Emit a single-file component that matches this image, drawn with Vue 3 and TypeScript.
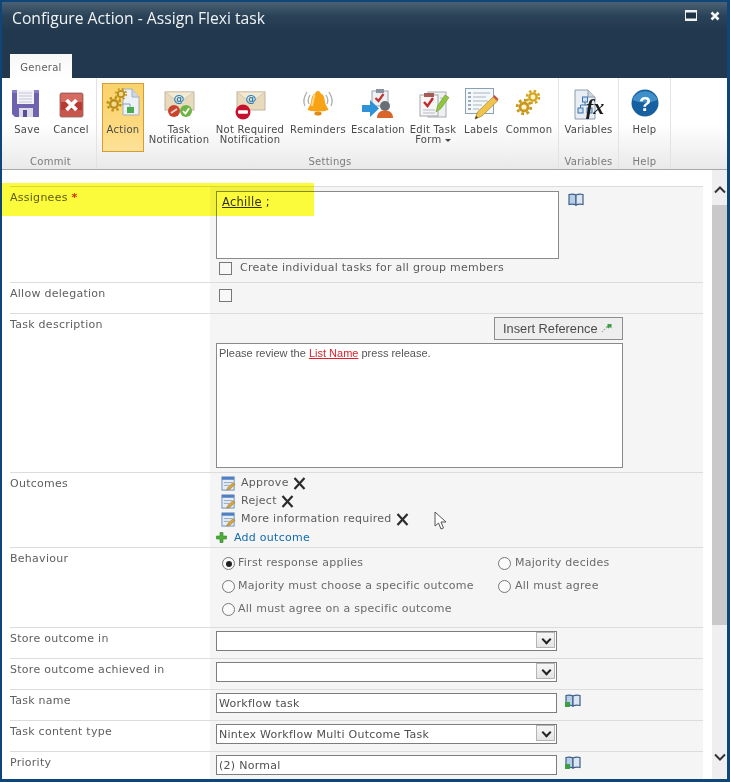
<script setup lang="ts">
const outcomes = ['Approve', 'Reject', 'More information required']
const leftOptions = [
  { label: 'First response applies', checked: true },
  { label: 'Majority must choose a specific outcome', checked: false },
  { label: 'All must agree on a specific outcome', checked: false },
]
const rightOptions = ['Majority decides', 'All must agree']
</script>

<template>
  <div class="dialog">
    <header class="titlebar">
      <div class="title-row">
        <h1>Configure Action - Assign Flexi task</h1>
        <div class="window-controls">
          <svg width="12" height="11" viewBox="0 0 12 11">
            <rect x="0.5" y="0.5" width="11" height="10" fill="#1f3347" stroke="#f2f2f2" />
            <rect x="0" y="0" width="12" height="2.5" fill="#f2f2f2" />
            <rect x="1" y="8.5" width="10" height="2" fill="#f2f2f2" />
          </svg>
          <svg width="10" height="10" viewBox="0 0 10 10">
            <path d="M1.5 1.5l7 7M8.5 1.5l-7 7" stroke="#f4f4f4" stroke-width="2.6" />
          </svg>
        </div>
      </div>
      <div class="tab">General</div>
    </header>

    <nav class="ribbon">
      <section class="group commit">
        <div class="buttons">
          <div class="rb w44">
            <svg class="ico" viewBox="0 0 36 36">
              <path d="M3 5h27v27H6l-3-3z" fill="#6f62ae" />
              <path d="M3 5h27v3H3z" fill="#8a7ec6" />
              <rect x="8" y="5" width="17" height="14" fill="#f3f3f8" />
              <path d="M10 8h13M10 11h13M10 14h13M10 17h13" stroke="#c5c5d4" />
              <rect x="10" y="23" width="14" height="9" fill="#dcdce8" />
              <rect x="14" y="25" width="4" height="7" fill="#5b4f98" />
            </svg>
            <span>Save</span>
          </div>
          <div class="rb w44">
            <svg class="ico" viewBox="0 0 36 36">
              <rect x="7" y="8" width="23" height="24" rx="1.5" fill="#b93a30" stroke="#a4827c" />
              <rect x="8" y="9" width="21" height="8" fill="#d66a60" />
              <rect x="8" y="25" width="21" height="6" fill="#c9564c" />
              <path d="M13.500 15l10 10M23.500 15l-10 10" stroke="#fff" stroke-width="3.800" />
            </svg>
            <span>Cancel</span>
          </div>
        </div>
        <footer>Commit</footer>
      </section>

      <section class="group settings">
        <div class="buttons">
          <div class="rb w42 active">
            <svg class="ico" viewBox="0 0 36 36">
              <path d="M18 4h9l7 8v18H18z" fill="#eef2f7" stroke="#9fb0c2" />
              <path d="M27 4v8h7" fill="#cfd8e2" stroke="#9fb0c2" />
              <path d="M17 19h8v4" stroke="#7fa0b8" fill="none" />
              <rect x="22" y="22" width="7" height="6" fill="#4cab50" />
              <circle cx="16" cy="9" r="3.200" fill="#f3dc8c" stroke="#b98d1c" stroke-width="1.800" />
              <circle cx="16" cy="9" r="5.200" fill="none" stroke="#c99a1f" stroke-width="1.800" stroke-dasharray="2 2.100" />
              <circle cx="9" cy="19" r="3.800" fill="#f3dc8c" stroke="#b98d1c" stroke-width="2.400" />
              <circle cx="9" cy="19" r="6.400" fill="none" stroke="#bd8f1a" stroke-width="2.400" stroke-dasharray="2.400 2.600" />
            </svg>
            <span>Action</span>
          </div>
          <div class="rb w70">
            <svg class="ico" viewBox="0 0 36 36">
              <rect x="4" y="7" width="29" height="18" fill="#e8dbbd" stroke="#c0b59c" />
              <path d="M4 7l14.500 11L33 7z" fill="#f3ead4" stroke="#d3c8ae" />
              <text x="18" y="17" class="at">@</text>
              <circle cx="13" cy="26" r="6" fill="#c9442e" />
              <path d="M10 28l6-4" stroke="#f3d6cf" stroke-width="1.800" />
              <circle cx="25" cy="26" r="6" fill="#6fb544" />
              <path d="M22 26l2.400 2.600 3.800-5.400" fill="none" stroke="#fff" stroke-width="1.800" />
            </svg>
            <span>Task<br />Notification</span>
          </div>
          <div class="rb w72">
            <svg class="ico" viewBox="0 0 36 36">
              <rect x="5" y="7" width="28" height="18" fill="#e8dbbd" stroke="#c0b59c" />
              <path d="M5 7l14 11L33 7z" fill="#f3ead4" stroke="#d3c8ae" />
              <text x="19" y="17" class="at">@</text>
              <circle cx="11" cy="27" r="7.500" fill="#c8102e" />
              <rect x="6" y="25.200" width="10" height="3.600" rx="1" fill="#fff" />
            </svg>
            <span>Not Required<br />Notification</span>
          </div>
          <div class="rb w64">
            <svg class="ico" viewBox="0 0 36 36">
              <path d="M7 7q-5 8-2 14M10 10q-3 5-1 9M29 7q5 8 2 14M26 10q3 5 1 9" fill="none" stroke="#adadad" stroke-width="1.300" />
              <path d="M18 6c1.600 0 2.600 1 2.600 2.400 3.400 1.300 4 4.600 4.400 8.600.3 3 2.400 5 3.500 7.500 0 1-5 2-10.500 2S7.500 25.500 7.500 24.500c1.100-2.500 3.200-4.500 3.500-7.500.4-4 1-7.300 4.400-8.600C15.400 7 16.400 6 18 6z" fill="#f8a216" />
              <path d="M15 10c-2 2-2 7-3 11" stroke="#fcd98a" stroke-width="2" fill="none" />
              <ellipse cx="18" cy="28.500" rx="3.600" ry="2" fill="#e08a12" />
            </svg>
            <span>Reminders</span>
          </div>
          <div class="rb w56">
            <svg class="ico" viewBox="0 0 36 36">
              <rect x="12" y="6" width="16" height="15" fill="#eef0f3" stroke="#9aa2ac" />
              <rect x="16" y="4" width="8" height="4" fill="#8a929c" />
              <path d="M15.500 13l3 3 5-7" fill="none" stroke="#c0322e" stroke-width="2.200" />
              <circle cx="25" cy="21" r="5" fill="#6a6f75" />
              <path d="M17 33c0-5 3-7.500 8-7.500s8 2.500 8 7.500z" fill="#d9652b" />
              <path d="M2 20h8v-5l9 8.500-9 8.500v-5H2z" fill="#2d93d6" />
            </svg>
            <span>Escalation</span>
          </div>
          <div class="rb w54">
            <svg class="ico" viewBox="0 0 36 36">
              <rect x="13" y="7" width="18" height="25" fill="#eef0f2" stroke="#a5adb5" />
              <path d="M25 13h3M25 17h3M25 21h3" stroke="#b5bcc4" />
              <rect x="5" y="10" width="18" height="21" fill="#f6f6f6" stroke="#a5a5a5" />
              <rect x="9" y="8" width="10" height="4" fill="#a85a57" />
              <path d="M9 17l3.500 4 5.500-8" fill="none" stroke="#c6282c" stroke-width="2.400" />
              <path d="M8 25h12M8 28h12" stroke="#b5bcc4" />
              <path d="M21 27l1.500-6L30 10l4 2.500-8 11z" fill="#8fc53f" stroke="#6b9a2c" stroke-width=".6" />
            </svg>
            <span>Edit Task<br />Form <i class="caret"></i></span>
          </div>
          <div class="rb w42">
            <svg class="ico" viewBox="0 0 36 36">
              <rect x="2.500" y="3.500" width="28" height="25" fill="#f5f8fb" stroke="#8aa0b5" />
              <path d="M5 8h3M5 12h3M5 16h3M5 20h3M5 24h3" stroke="#4a5f74" />
              <path d="M10 8h17M10 12h13M10 16h15M10 20h9M10 24h6" stroke="#aab6c2" />
              <path d="M12 34l2.500-7L30 12l4.500 4L19 31z" fill="#f0c34a" stroke="#a5822c" stroke-width=".7" />
              <path d="M30 12l4.500 4 1-2-4-4z" fill="#c9554c" />
              <path d="M12 34l1-3 2 1.500z" fill="#333" />
            </svg>
            <span>Labels</span>
          </div>
          <div class="rb w54">
            <svg class="ico" viewBox="0 0 36 36">
              <circle cx="22" cy="12" r="3.600" fill="#fbf3cf" stroke="#d5a51e" stroke-width="2.400" />
              <circle cx="22" cy="12" r="6" fill="none" stroke="#d5a51e" stroke-width="2.600" stroke-dasharray="2.500 2.200" />
              <circle cx="13" cy="22" r="4" fill="#fbf3cf" stroke="#c9971a" stroke-width="2.800" />
              <circle cx="13" cy="22" r="6.800" fill="none" stroke="#c9971a" stroke-width="2.800" stroke-dasharray="2.800 2.500" />
            </svg>
            <span>Common</span>
          </div>
        </div>
        <footer>Settings</footer>
      </section>

      <section class="group variables">
        <div class="buttons">
          <div class="rb w60">
            <svg class="ico" viewBox="0 0 36 36">
              <path d="M4 5h13l7 7v22H4z" fill="#e9eef4" stroke="#8c9cb0" />
              <path d="M17 5v7h7" fill="#ccd6e2" stroke="#8c9cb0" />
              <rect x="11.500" y="12" width="5" height="5" fill="#cfe1f3" stroke="#3d74ab" />
              <rect x="7" y="23" width="5" height="5" fill="#cfe1f3" stroke="#3d74ab" />
              <rect x="16" y="23" width="5" height="5" fill="#cfe1f3" stroke="#3d74ab" />
              <path d="M14 17v3M9.500 23v-3h9v3" fill="none" stroke="#3d74ab" />
              <text x="15" y="29" class="fx">fx</text>
            </svg>
            <span>Variables</span>
          </div>
        </div>
        <footer>Variables</footer>
      </section>

      <section class="group help">
        <div class="buttons">
          <div class="rb w52">
            <svg class="ico" viewBox="0 0 36 36">
              <circle cx="18" cy="18" r="13.500" fill="#17609f" />
              <path d="M5.500 15a13 12 0 0 1 25 0q-12.500 5-25 0z" fill="#3f8fcb" />
              <text x="18" y="25.500" class="q">?</text>
            </svg>
            <span>Help</span>
          </div>
        </div>
        <footer>Help</footer>
      </section>
    </nav>

    <main class="content">
      <div class="form">
        <div class="row assignees">
          <label>Assignees <b>*</b></label>
          <div class="field">
            <div class="with-icon">
              <div class="people-box"><u>Achille</u> ;</div>
              <svg class="book" viewBox="0 0 16 13">
                <path d="M1 1.500q4-1 7 .5v10q-3-1.500-7-.5z" fill="#b8cde6" stroke="#3f5f88" stroke-width="1.200" />
                <path d="M15 1.500q-4-1-7 .5v10q3-1.500 7-.5z" fill="#dbe6f2" stroke="#3f5f88" stroke-width="1.200" />
              </svg>
            </div>
            <div class="check-line">
              <span class="checkbox"></span>
              <span>Create individual tasks for all group members</span>
            </div>
          </div>
        </div>

        <div class="row delegation">
          <label>Allow delegation</label>
          <div class="field"><span class="checkbox"></span></div>
        </div>

        <div class="row description">
          <label>Task description</label>
          <div class="field">
            <button type="button" class="insert-ref">
              Insert Reference
              <svg width="11" height="10" viewBox="0 0 11 10">
                <path d="M1 9l1-1M3 7l1-1M5 5l1-1" stroke="#9db79d" stroke-width="1.200" />
                <path d="M6 1h4.500v4.500L9 4 7.500 5.500l-2-2L7 2z" fill="#3aa043" />
              </svg>
            </button>
            <div class="rich-text">Please review the <a>List Name</a> press release.</div>
          </div>
        </div>

        <div class="row outcomes">
          <label>Outcomes</label>
          <div class="field">
            <div v-for="item in outcomes" :key="item" class="outcome">
              <svg class="edit" viewBox="0 0 16 16">
                <rect x="1" y="1" width="13" height="14" fill="#e6edf7" stroke="#6c8db5" />
                <rect x="1" y="1" width="13" height="3" fill="#4f7fc4" />
                <path d="M3 7h9M3 10h6" stroke="#8fa5bd" />
                <path d="M6 15l1.500-3L13 7l2 2-5.500 5z" fill="#d9a63a" stroke="#8a6a22" stroke-width=".5" />
              </svg>
              <span>{{ item }}</span>
              <svg class="remove" viewBox="0 0 13 13">
                <path d="M1.500 1l10 11M11.500 1l-10 11" stroke="#2b2b2b" stroke-width="2.200" />
              </svg>
            </div>
            <div class="add-outcome">
              <svg width="11" height="11" viewBox="0 0 11 11">
                <path d="M4 .5h3v3.500h3.500v3H7v3.500H4V7H.5V4H4z" fill="#4fae3a" stroke="#2f7f24" stroke-width=".6" />
              </svg>
              <a>Add outcome</a>
            </div>
          </div>
        </div>

        <div class="row behaviour">
          <label>Behaviour</label>
          <div class="field options">
            <div class="option-col">
              <div v-for="opt in leftOptions" :key="opt.label" class="option">
                <span class="radio" :class="{ checked: opt.checked }"></span>
                <span>{{ opt.label }}</span>
              </div>
            </div>
            <div class="option-col right">
              <div v-for="opt in rightOptions" :key="opt" class="option">
                <span class="radio"></span>
                <span>{{ opt }}</span>
              </div>
            </div>
          </div>
        </div>

        <div class="row single">
          <label>Store outcome in</label>
          <div class="field">
            <div class="select"><span></span><i class="drop"></i></div>
          </div>
        </div>

        <div class="row single">
          <label>Store outcome achieved in</label>
          <div class="field">
            <div class="select"><span></span><i class="drop"></i></div>
          </div>
        </div>

        <div class="row single">
          <label>Task name</label>
          <div class="field inline">
            <div class="input">Workflow task</div>
            <svg class="book" viewBox="0 0 16 13">
              <path d="M1 1.500q4-1 7 .5v10q-3-1.500-7-.5z" fill="#b8cde6" stroke="#3f5f88" stroke-width="1.200" />
              <path d="M15 1.500q-4-1-7 .5v10q3-1.500 7-.5z" fill="#dbe6f2" stroke="#3f5f88" stroke-width="1.200" />
              <rect x="0" y="8" width="5" height="5" fill="#3aa043" />
            </svg>
          </div>
        </div>

        <div class="row single">
          <label>Task content type</label>
          <div class="field">
            <div class="select"><span>Nintex Workflow Multi Outcome Task</span><i class="drop"></i></div>
          </div>
        </div>

        <div class="row single">
          <label>Priority</label>
          <div class="field inline">
            <div class="input">(2) Normal</div>
            <svg class="book" viewBox="0 0 16 13">
              <path d="M1 1.500q4-1 7 .5v10q-3-1.500-7-.5z" fill="#b8cde6" stroke="#3f5f88" stroke-width="1.200" />
              <path d="M15 1.500q-4-1-7 .5v10q3-1.500 7-.5z" fill="#dbe6f2" stroke="#3f5f88" stroke-width="1.200" />
              <rect x="0" y="8" width="5" height="5" fill="#3aa043" />
            </svg>
          </div>
        </div>
      </div>

      <aside class="scrollbar">
        <svg width="12" height="8" viewBox="0 0 12 8" class="arrow up">
          <path d="M1 6.500l5-5 5 5" fill="none" stroke="#333" stroke-width="2" />
        </svg>
        <div class="thumb"></div>
        <svg width="12" height="8" viewBox="0 0 12 8" class="arrow down">
          <path d="M1 1.500l5 5 5-5" fill="none" stroke="#333" stroke-width="2" />
        </svg>
      </aside>

      <div class="marker"></div>
      <svg class="pointer" width="14" height="20" viewBox="0 0 14 20">
        <path d="M1 1v14l3.500-3 2.500 6 2.500-1-2.500-6H12z" fill="#fff" stroke="#555" />
      </svg>
    </main>
  </div>
</template>

<style>
html,
body {
  margin: 0;
  background: #fff;
}
</style>

<style scoped>
.dialog {
  width: 730px;
  height: 782px;
  box-sizing: border-box;
  border: 2px solid #0f4679;
  border-bottom-width: 3px;
  border-right-width: 3px;
  display: flex;
  flex-direction: column;
  overflow: hidden;
  font-family: 'DejaVu Sans', sans-serif;
  font-size: 11px;
  letter-spacing: 0.27px;
  color: #5c5c5c;
  background: #fff;
}

.titlebar {
  height: 76px;
  flex: none;
  box-sizing: border-box;
  padding-left: 8px;
  display: flex;
  flex-direction: column;
  background: linear-gradient(#4b6274 0, #2a4257 14px, #22384e 28px, #22384e 100%);
}

.title-row {
  display: flex;
  justify-content: space-between;
  align-items: flex-start;
  flex: 1;
  padding: 5px 6px 0 2px;
}

.title-row h1 {
  margin: 0;
  font-family: 'Open Sans', sans-serif;
  font-size: 15.7px;
  line-height: 22px;
  font-weight: 400;
  letter-spacing: 0;
  color: #f1f3f5;
}

.window-controls {
  display: flex;
  gap: 13px;
  align-items: center;
  padding: 3px 1px 0 0;
}

.tab {
  width: 62px;
  height: 24px;
  box-sizing: border-box;
  background: linear-gradient(#f7f7f7, #fff);
  font-size: 10px;
  color: #5f5f5f;
  text-align: center;
  line-height: 27px;
}

.ribbon {
  height: 92px;
  flex: none;
  box-sizing: border-box;
  display: flex;
  border-bottom: 1px solid #a9a9a9;
  background: linear-gradient(#fff 0, #fff 50%, #e9e9e9 100%);
}

.group {
  display: flex;
  flex-direction: column;
  border-right: 1px solid #e3e3e3;
}

.group.commit {
  width: 95px;
  padding-left: 3px;
  box-sizing: border-box;
}

.group.settings {
  width: 462px;
  padding-left: 5px;
  box-sizing: border-box;
}

.group.variables {
  width: 60px;
  box-sizing: border-box;
}

.group.help {
  width: 52px;
  box-sizing: border-box;
}

.buttons {
  display: flex;
  height: 69px;
  margin-top: 5px;
}

.group footer {
  flex: 1;
  text-align: center;
  font-size: 10px;
  line-height: 19px;
  color: #7b7b7b;
}

.rb {
  height: 69px;
  box-sizing: border-box;
  display: flex;
  flex-direction: column;
  align-items: center;
  padding-top: 2px;
  font-size: 10px;
  line-height: 10px;
  color: #4a4a4a;
  text-align: center;
  white-space: nowrap;
}

.rb .ico {
  width: 36px;
  height: 36px;
  margin-bottom: 4px;
  flex: none;
}

.rb.active {
  background: linear-gradient(#fbd36b, #fdd97e 60%, #fde29a);
  outline: 1px solid #d69d35;
  outline-offset: -1px;
}

.w42 {
  width: 42px;
}
.w44 {
  width: 44px;
}
.w52 {
  width: 52px;
}
.w54 {
  width: 54px;
}
.w56 {
  width: 56px;
}
.w60 {
  width: 60px;
}
.w64 {
  width: 64px;
}
.w70 {
  width: 70px;
}
.w72 {
  width: 72px;
}

.caret {
  display: inline-block;
  border: 3px solid transparent;
  border-top-color: #444;
  border-bottom: 0;
  vertical-align: 1px;
}

.at {
  font-family: 'DejaVu Sans', sans-serif;
  font-size: 11px;
  font-weight: 700;
  letter-spacing: 0;
  fill: #2a7fb8;
  text-anchor: middle;
}

.fx {
  font-family: 'Liberation Serif', serif;
  font-style: italic;
  font-weight: 700;
  font-size: 22px;
  letter-spacing: 0;
  fill: #1c1c1c;
}

.q {
  font-family: 'Liberation Sans', sans-serif;
  font-weight: 700;
  font-size: 20px;
  letter-spacing: 0;
  fill: #fff;
  text-anchor: middle;
}

.content {
  flex: 1;
  min-height: 0;
  position: relative;
  display: flex;
  justify-content: space-between;
  overflow: hidden;
  background: #fff;
}

.form {
  width: 693px;
  margin-left: 8px;
  padding-top: 16px;
  flex: none;
}

.row {
  display: flex;
  box-sizing: border-box;
  border-top: 1px solid #dcdcdc;
}

.row > label {
  width: 200px;
  flex: none;
  box-sizing: border-box;
  padding-top: 4px;
  line-height: 14px;
  color: #5e5e5e;
}

.row > label b {
  color: #e2281c;
  font-weight: 700;
}

.field {
  flex: 1;
  box-sizing: border-box;
  padding-left: 6px;
  background: #f5f5f5;
}

.assignees {
  height: 96px;
}
.delegation {
  height: 31px;
}
.delegation .field {
  padding: 6px 0 0 9px;
}
.description {
  height: 159px;
}
.outcomes {
  height: 75px;
}
.behaviour {
  height: 80px;
}
.single {
  height: 31px;
}

.assignees .field {
  padding-top: 4px;
}

.with-icon {
  display: flex;
  align-items: flex-start;
  gap: 9px;
}

.people-box {
  width: 343px;
  height: 68px;
  box-sizing: border-box;
  border: 1px solid #8a8a8a;
  background: #fff;
  padding: 2px 5px;
  font-size: 11.5px;
  line-height: 16px;
  color: #333;
}

.book {
  width: 16px;
  height: 13px;
  margin-top: 2px;
  flex: none;
}

.check-line {
  display: flex;
  align-items: center;
  gap: 8px;
  margin: 2px 0 0 3px;
  line-height: 14px;
}

.checkbox {
  display: block;
  width: 11px;
  height: 11px;
  flex: none;
  border: 1px solid #777;
  background: #f8f8f8;
}

.insert-ref {
  display: block;
  width: 129px;
  height: 23px;
  margin: 3px 0 3px 278px;
  padding: 0 0 0 8px;
  box-sizing: border-box;
  border: 1px solid #8d8d8d;
  background: #eee;
  font-family: 'Liberation Sans', sans-serif;
  font-size: 12.8px;
  letter-spacing: 0;
  color: #4c4c4c;
  text-align: left;
  white-space: nowrap;
}

.rich-text {
  width: 407px;
  height: 125px;
  box-sizing: border-box;
  border: 1px solid #8a8a8a;
  background: #fff;
  padding: 2px 2px;
  font-family: 'Liberation Sans', sans-serif;
  font-size: 11px;
  letter-spacing: 0;
  line-height: 14px;
  color: #555;
}

.rich-text a {
  color: #e0202c;
  text-decoration: underline;
}

.outcomes .field {
  padding-top: 1px;
}

.outcome {
  display: flex;
  align-items: center;
  height: 18px;
  margin-left: 5px;
  gap: 5px;
  line-height: 18px;
}

.edit {
  width: 15px;
  height: 15px;
  flex: none;
}

.remove {
  width: 13px;
  height: 13px;
  flex: none;
  margin: 1px 0 0 -1px;
}

.add-outcome {
  display: flex;
  align-items: center;
  gap: 7px;
  height: 18px;
}

.add-outcome a {
  color: #0f6cb0;
}

.options {
  display: flex;
  padding: 3px 0 0 12px;
}

.option-col {
  width: 276px;
}

.option-col.right {
  width: auto;
}

.option {
  display: flex;
  align-items: center;
  height: 23px;
  gap: 3px;
  color: #6a6a6a;
}

.option-col.right .option {
  gap: 4px;
}

.radio {
  display: block;
  width: 11px;
  height: 11px;
  flex: none;
  border: 1px solid #777;
  border-radius: 50%;
  background: #fafafa;
  position: relative;
  margin-top: 2px;
}

.radio.checked::after {
  content: '';
  position: absolute;
  left: 2.5px;
  top: 2.5px;
  width: 6px;
  height: 6px;
  border-radius: 50%;
  background: #222;
}

.select,
.input {
  width: 341px;
  height: 20px;
  box-sizing: border-box;
  border: 1px solid #7d7d7d;
  background: #fff;
  padding-left: 2px;
  line-height: 19px;
  color: #4f4f4f;
  margin-top: 3px;
}

.select {
  display: flex;
  justify-content: space-between;
}

.drop {
  width: 19px;
  height: 16px;
  margin: 0 1px;
  flex: none;
  box-sizing: border-box;
  background: linear-gradient(#f6f6f6, #e4e4e4);
  border: 1px solid #b4b4b4;
  position: relative;
}

.drop::after {
  content: '';
  position: absolute;
  left: 5.5px;
  top: 2.5px;
  width: 5px;
  height: 5px;
  border: solid #222;
  border-width: 0 2px 2px 0;
  transform: rotate(45deg);
}

.field.inline {
  display: flex;
  align-items: flex-start;
  gap: 8px;
}

.field.inline .book {
  margin-top: 4px;
}

.scrollbar {
  width: 15px;
  flex: none;
  background: #efefef;
  display: flex;
  flex-direction: column;
  align-items: center;
}

.scrollbar .arrow.up {
  margin: 16px 0 11px;
}

.thumb {
  width: 15px;
  height: 420px;
  background: #c9c9c9;
}

.scrollbar .arrow.down {
  margin-top: 128px;
}

.marker {
  position: absolute;
  left: -2px;
  top: 13px;
  width: 314px;
  height: 33px;
  background: #fbfb3c;
  mix-blend-mode: multiply;
}

.pointer {
  position: absolute;
  left: 432px;
  top: 341px;
}
</style>
